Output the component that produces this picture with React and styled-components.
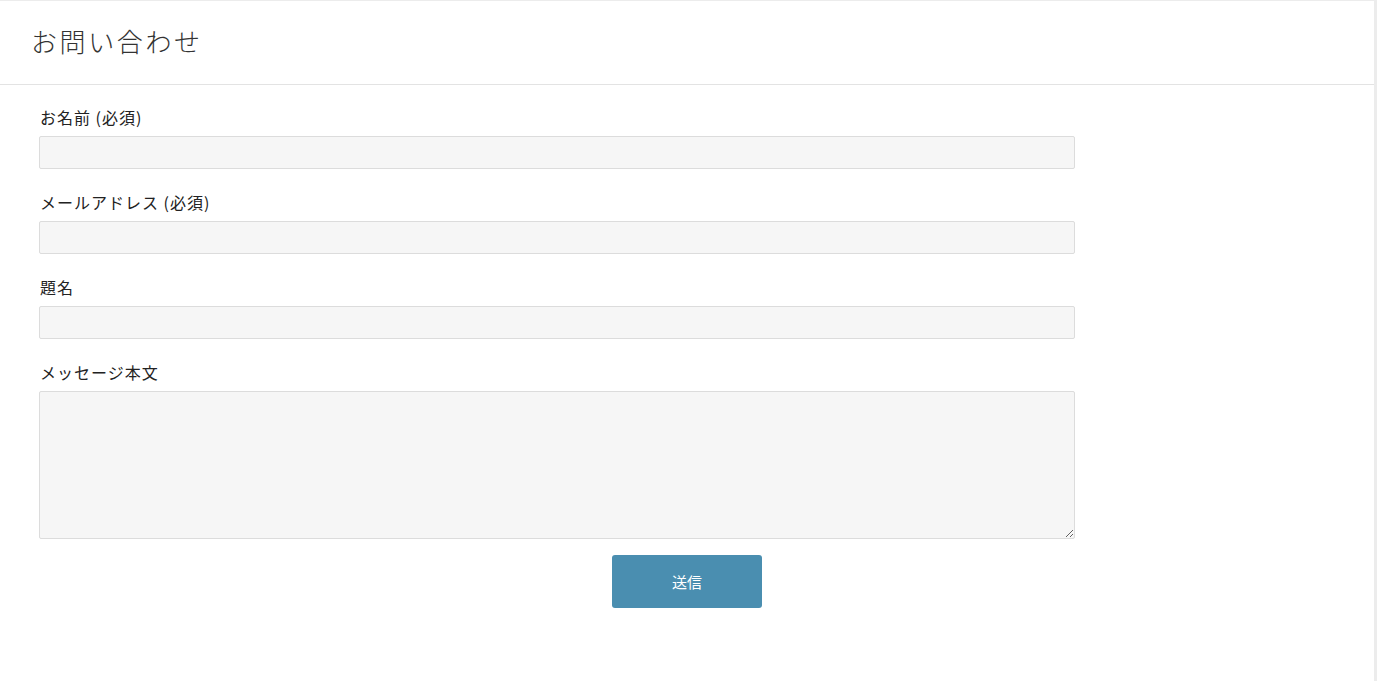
import React from "react";
import styled, { createGlobalStyle } from "styled-components";

const Global = createGlobalStyle`
  html, body { margin: 0; padding: 0; background: #fff; }
  body { font-family: "Noto Sans CJK JP", "Noto Sans", sans-serif; color: #333; }
  * { box-sizing: border-box; }
`;

const Page = styled.div`
  display: flex;
  width: 1377px;
  min-height: 681px;
`;

const Main = styled.div`
  flex: 1;
  display: flex;
  flex-direction: column;
`;

const Strip = styled.div`
  width: 3px;
  background: #ececec;
`;

const Header = styled.header`
  height: 85px;
  border-top: 1px solid #ececec;
  border-bottom: 1px solid #e3e3e3;
  display: flex;
  align-items: center;
  padding-left: 31px;
  padding-bottom: 5px;
`;

const Title = styled.h1`
  margin: 0;
  font-size: 26px;
  font-weight: 300;
  letter-spacing: 2.6px;
  color: #333;
`;

const Form = styled.form`
  display: flex;
  flex-direction: column;
  padding-top: 20px;
`;

const Fields = styled.div`
  display: flex;
  flex-direction: column;
  width: 1036px;
  margin-left: 39px;
`;

const Field = styled.div`
  display: flex;
  flex-direction: column;
  margin-bottom: 21px;
  &:last-child { margin-bottom: 16px; }
`;

const Label = styled.label`
  font-size: 16px;
  letter-spacing: 1px;
  line-height: 24px;
  padding-left: 1px;
  margin-bottom: 7px;
  color: #222;
`;

const Input = styled.input`
  height: 33px;
  width: 100%;
  background: #f6f6f6;
  border: 1px solid #dcdcdc;
  border-radius: 2px;
  outline: none;
  font: inherit;
`;

const TextArea = styled.textarea`
  height: 148px;
  width: 100%;
  background: #f6f6f6;
  border: 1px solid #dcdcdc;
  border-radius: 2px;
  outline: none;
  font: inherit;
  display: block;
`;

const ButtonRow = styled.div`
  display: flex;
  justify-content: center;
`;

const Submit = styled.button`
  width: 150px;
  height: 53px;
  background: #4a8eb0;
  color: #fff;
  border: none;
  border-radius: 3px;
  font-family: inherit;
  font-size: 15px;
  letter-spacing: 0;
  cursor: pointer;
`;

const fields = [
  { id: "name", label: "お名前 (必須)" },
  { id: "email", label: "メールアドレス (必須)" },
  { id: "subject", label: "題名" },
];

export default function App() {
  return (
    <>
      <Global />
      <Page>
        <Main>
          <Header>
            <Title>お問い合わせ</Title>
          </Header>
          <Form onSubmit={(e) => e.preventDefault()}>
            <Fields>
              {fields.map((f) => (
                <Field key={f.id}>
                  <Label htmlFor={f.id}>{f.label}</Label>
                  <Input id={f.id} type="text" />
                </Field>
              ))}
              <Field>
                <Label htmlFor="message">メッセージ本文</Label>
                <TextArea id="message" />
              </Field>
            </Fields>
            <ButtonRow>
              <Submit type="submit">送信</Submit>
            </ButtonRow>
          </Form>
        </Main>
        <Strip />
      </Page>
    </>
  );
}
